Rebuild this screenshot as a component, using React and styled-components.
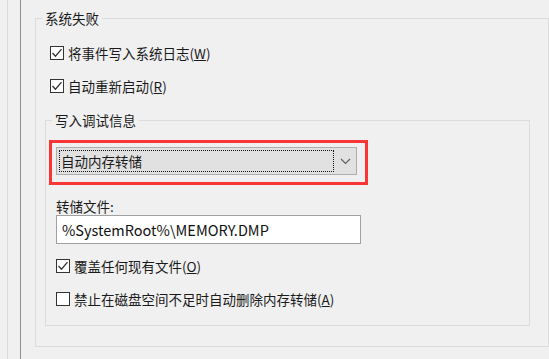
import React from 'react';
import styled, { createGlobalStyle } from 'styled-components';

const GlobalStyle = createGlobalStyle`
  html, body {
    margin: 0;
    padding: 0;
    background: #f0f0f0;
  }
  body {
    font-family: "Noto Sans CJK SC", "Noto Sans", sans-serif;
    font-size: 13.5px;
    color: #1a1a1a;
  }
`;

const Page = styled.div`
  display: flex;
  height: 359px;
  overflow: hidden;
`;

const Rail = styled.div`
  flex: none;
  width: 12px;
  margin-left: 7px;
  border-left: 1px solid #dadada;
  border-right: 1px solid #8e8e8e;
`;

const Content = styled.div`
  flex: none;
  padding: 9px 0 0 14px;
`;

const GroupBox = styled.fieldset`
  box-sizing: border-box;
  width: ${p => p.$width}px;
  margin: ${p => p.$margin || '0'};
  padding: 0;
  border: 1px solid #dcdcdc;
  min-width: 0;
`;

const Legend = styled.legend`
  margin-left: 6px;
  padding: 0 3px;
  line-height: 18px;
  color: #1a1a1a;
`;

const GroupBody = styled.div`
  display: flex;
  flex-direction: column;
  align-items: flex-start;
  padding: ${p => p.$padding};
`;

const CheckRow = styled.label`
  display: flex;
  align-items: center;
  gap: 4px;
  height: 20px;
  margin-top: ${p => p.$gap || 0}px;
  margin-left: ${p => p.$indent || 0}px;
  white-space: nowrap;
`;

const Box = styled.span`
  box-sizing: border-box;
  width: 14px;
  height: 14px;
  border: 1px solid #333;
  background: #fff;
  display: flex;
  align-items: center;
  justify-content: center;
`;

const RedFrame = styled.div`
  margin: 11px 0 0 -7px;
  padding: 4px 8px 7px 4px;
  border: 3px solid #fa3535;
`;

const Combo = styled.div`
  box-sizing: border-box;
  width: 301px;
  height: 28px;
  display: flex;
  align-items: stretch;
  background: #e1e1e1;
  border: 1px solid #adadad;
`;

const ComboValue = styled.div`
  flex: 1;
  margin: 2px 0 2px 2px;
  padding-left: 1px;
  border: 1px dotted #111;
  display: flex;
  align-items: center;
  line-height: 18px;
`;

const ComboArrow = styled.div`
  width: 22px;
  display: flex;
  align-items: center;
  justify-content: center;
`;

const FieldLabel = styled.div`
  margin-top: 12px;
  line-height: 18px;
`;

const TextBox = styled.div`
  box-sizing: border-box;
  width: 305px;
  height: 29px;
  padding-left: 5px;
  display: flex;
  align-items: center;
  background: #fff;
  border: 1px solid #a0a0a0;
  font-size: 14.5px;
  color: #111;
`;

function Check({ checked, children, gap, indent }) {
  return (
    <CheckRow $gap={gap} $indent={indent}>
      <Box>
        {checked && (
          <svg width="12" height="12" viewBox="0 0 12 12">
            <path d="M1.5 6 L4.5 9.2 L10.5 2.2" fill="none" stroke="#333" strokeWidth="1.3" />
          </svg>
        )}
      </Box>
      <span>{children}</span>
    </CheckRow>
  );
}

export default function App() {
  return (
    <>
      <GlobalStyle />
      <Page>
        <Rail />
        <Content>
          <GroupBox $width={514}>
            <Legend>系统失败</Legend>
            <GroupBody $padding="16px 0 20px 9px">
              <Check checked indent={5}>将事件写入系统日志(<u>W</u>)</Check>
              <Check checked indent={5} gap={13}>自动重新启动(<u>R</u>)</Check>
              <GroupBox $width={485} $margin="15px 0 0 0">
                <Legend>写入调试信息</Legend>
                <GroupBody $padding="0 0 16px 10px">
                  <RedFrame>
                    <Combo>
                      <ComboValue>自动内存转储</ComboValue>
                      <ComboArrow>
                        <svg width="11" height="7" viewBox="0 0 11 7">
                          <path d="M1 1 L5.5 5.5 L10 1" fill="none" stroke="#606060" strokeWidth="1.2" />
                        </svg>
                      </ComboArrow>
                    </Combo>
                  </RedFrame>
                  <FieldLabel>转储文件:</FieldLabel>
                  <TextBox>%SystemRoot%\MEMORY.DMP</TextBox>
                  <Check checked gap={12}>覆盖任何现有文件(<u>O</u>)</Check>
                  <Check gap={13}>禁止在磁盘空间不足时自动删除内存转储(<u>A</u>)</Check>
                </GroupBody>
              </GroupBox>
            </GroupBody>
          </GroupBox>
        </Content>
      </Page>
    </>
  );
}
